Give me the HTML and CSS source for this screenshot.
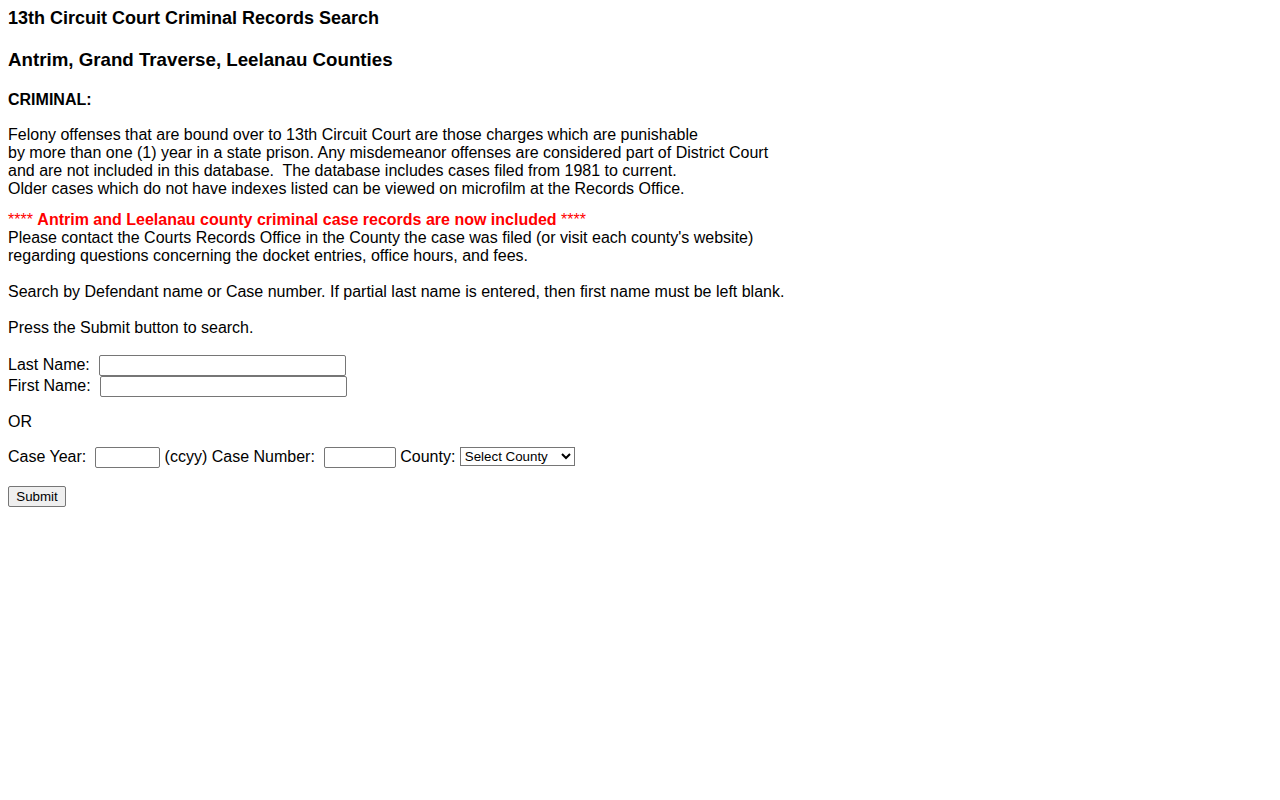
FILE: index.html
```html
<!DOCTYPE html>
<html>
<head>
<meta charset="utf-8">
<title>13th Circuit Court Criminal Records Search</title>
<link rel="stylesheet" href="styles.css">
</head>
<body>
<div class="title">13th Circuit Court Criminal Records Search</div>
<div class="counties">Antrim, Grand Traverse, Leelanau Counties</div>
<div class="section">CRIMINAL:</div>
<div class="para felony">Felony offenses that are bound over to 13th Circuit Court are those charges which are punishable<br>by more than one (1) year in a state prison. Any misdemeanor offenses are considered part of District Court<br>and are not included in this database.&nbsp; The database includes cases filed from 1981 to current.<br>Older cases which do not have indexes listed can be viewed on microfilm at the Records Office.</div>
<div class="para notice"><span class="red">**** <b>Antrim and Leelanau county criminal case records are now included</b> ****</span><br>Please contact the Courts Records Office in the County the case was filed (or visit each county's website)<br>regarding questions concerning the docket entries, office hours, and fees.</div>
<div class="para gap18">Search by Defendant name or Case number. If partial last name is entered, then first name must be left blank.</div>
<div class="para gap18">Press the Submit button to search.</div>
<form class="form">
  <div class="row"><span class="lbl">Last Name:&nbsp;&nbsp;</span><input type="text" class="name"></div>
  <div class="row"><span class="lbl">First Name:&nbsp;&nbsp;</span><input type="text" class="name"></div>
  <div class="or">OR</div>
  <div class="row case-row"><span class="lbl">Case Year:&nbsp;&nbsp;</span><input type="text" class="year"><span class="lbl">&nbsp;(ccyy) Case Number:&nbsp;&nbsp;</span><input type="text" class="casenum"><span class="lbl">&nbsp;County:&nbsp;</span><select class="county"><option>Select County</option><option>Antrim</option><option>Grand Traverse</option><option>Leelanau</option></select></div>
  <div class="submit-row"><button type="button" class="submit">Submit</button></div>
</form>
</body>
</html>
```
FILE: styles.css
```css
html, body {
  margin: 0;
  padding: 0;
  background: #ffffff;
}
body {
  padding: 9px 8px 8px 8px;
  font-family: "Liberation Sans", Arial, sans-serif;
  font-size: 16px;
  line-height: 18px;
  color: #000000;
}
.title {
  font-weight: bold;
  font-size: 18px;
  line-height: 18px;
  margin-top: 0;
}
.counties {
  font-weight: bold;
  font-size: 18.72px;
  line-height: 22px;
  margin-top: 22px;
}
.section {
  font-weight: bold;
  margin-top: 20px;
}
.felony {
  margin-top: 17px;
}
.notice {
  margin-top: 13px;
}
.gap18 {
  margin-top: 18px;
}
.red {
  color: #ff0000;
}
.form {
  margin: 18px 0 0 0;
}
.row {
  display: flex;
  align-items: flex-start;
  height: 21px;
}
.lbl {
  white-space: pre;
  padding-top: 1px;
}
.or {
  margin-top: 16px;
}
.case-row {
  margin-top: 16px;
}
input[type="text"] {
  box-sizing: border-box;
  height: 21px;
  border: 1px solid #767676;
  border-radius: 2px;
  padding: 1px 2px;
  font-family: "Liberation Sans", Arial, sans-serif;
  font-size: 13.33px;
  margin: 0;
  background: #fff;
}
.name { width: 247px; }
.year { width: 65px; }
.casenum { width: 72px; }
.county {
  box-sizing: border-box;
  width: 115px;
  height: 19px;
  font-family: "Liberation Sans", Arial, sans-serif;
  font-size: 13.33px;
  border: 1px solid #767676;
  border-radius: 0;
  margin: 0;
  background: #fff;
  color: #000;
}
.submit-row {
  margin-top: 18px;
  height: 21px;
}
.submit {
  box-sizing: border-box;
  height: 21px;
  width: 58px;
  padding: 1px 6px;
  font-family: "Liberation Sans", Arial, sans-serif;
  font-size: 13.33px;
  background: #efefef;
  border: 1px solid #767676;
  border-radius: 2px;
  color: #000;
  margin: 0;
}
```
